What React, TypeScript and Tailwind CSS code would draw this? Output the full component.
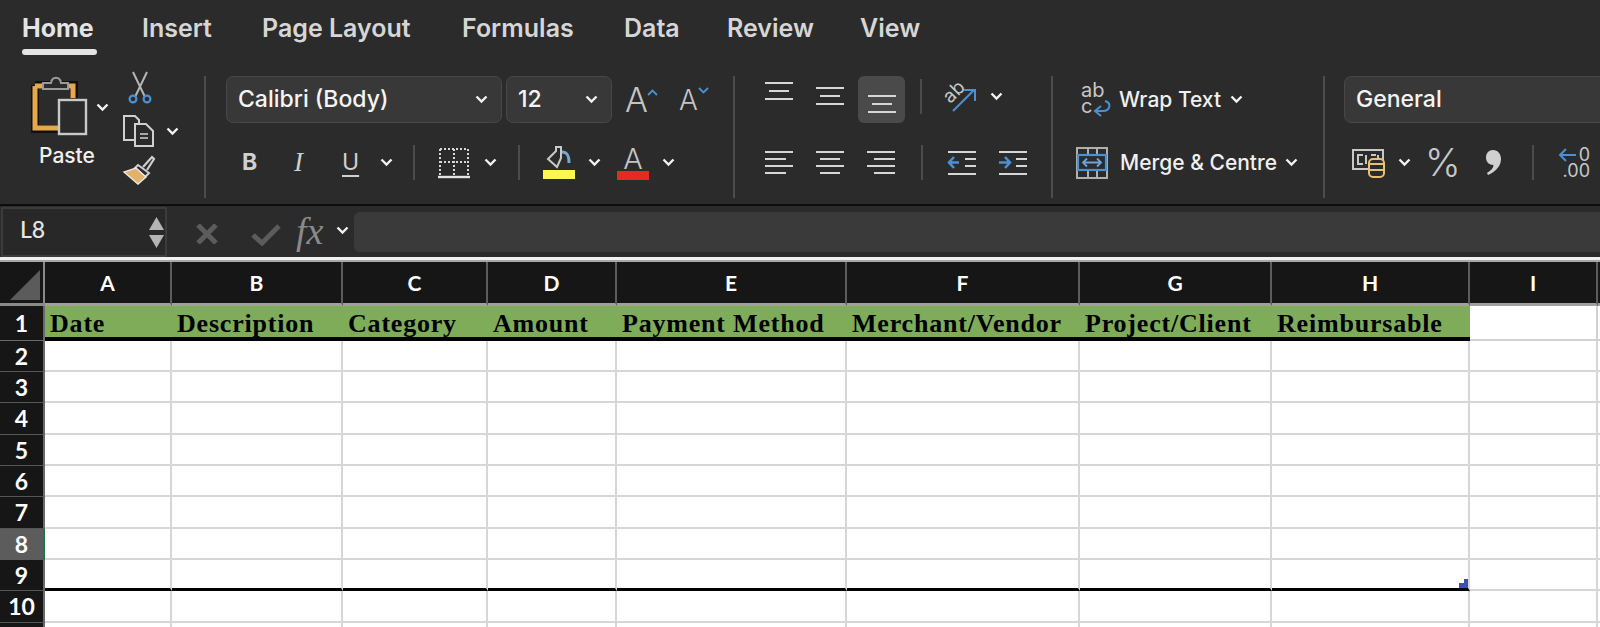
import React from 'react';

const tabs = [
  { label: 'Home', cls: 'ml-[22px] w-[75px] font-bold text-[#e4e4e4]' },
  { label: 'Insert', cls: 'ml-[45px] w-[72px]' },
  { label: 'Page Layout', cls: 'ml-[48px] w-[152px]' },
  { label: 'Formulas', cls: 'ml-[48px] w-[114px]' },
  { label: 'Data', cls: 'ml-[48px] w-[58px]' },
  { label: 'Review', cls: 'ml-[45px] w-[88px]' },
  { label: 'View', cls: 'ml-[45px] w-[60px]' },
];

const Chevron = ({ className = '' }: { className?: string }) => (
  <svg width="13" height="9" viewBox="0 0 13 9" className={`shrink-0 ${className}`}>
    <path d="M1.5 1.5 L6.5 6.5 L11.5 1.5" fill="none" stroke="#f2f2f2" strokeWidth="2.4" />
  </svg>
);

const Sep = ({ className = '' }: { className?: string }) => (
  <div className={`w-[2px] h-[35px] bg-[#4c4c4c] shrink-0 ${className}`} />
);

const Lines = ({ rows }: { rows: [number, number, number][] }) => (
  <svg width="30" height="26" viewBox="0 0 30 26" className="shrink-0">
    {rows.map(([y, x1, x2]) => (
      <line key={y} x1={x1} x2={x2} y1={y} y2={y} stroke="#d6d6d6" strokeWidth="2" />
    ))}
  </svg>
);

const PasteIcon = () => (
  <svg width="60" height="62" viewBox="0 0 60 62" className="shrink-0">
    <path d="M5 11 H44 V24 M5 11 V55 H30" fill="none" stroke="#111" strokeWidth="8" />
    <path d="M5 12 H43 V24 M5 12 V54 H30" fill="none" stroke="#e5a84b" strokeWidth="5" />
    <path d="M13 15 V9 H21 C22 2 30 2 31 9 H38 V15 Z" fill="#2b2b2b" stroke="#9a9a9a" strokeWidth="2" />
    <rect x="29" y="26" width="27" height="34" fill="#2b2b2b" stroke="#c9c9c9" strokeWidth="2.4" />
  </svg>
);

const ScissorsIcon = () => (
  <svg width="24" height="34" viewBox="0 0 24 34">
    <path d="M5 1 L17 26 M19 1 L7 26" fill="none" stroke="#b5b5b5" strokeWidth="2" />
    <circle cx="5" cy="28" r="3.4" fill="none" stroke="#4a90d2" strokeWidth="2.2" />
    <circle cx="19" cy="28" r="3.4" fill="none" stroke="#4a90d2" strokeWidth="2.2" />
  </svg>
);

const CopyIcon = () => (
  <svg width="34" height="34" viewBox="0 0 34 34">
    <path d="M13 26 H2 V2 H13 L17 6 V9" fill="none" stroke="#d0d0d0" strokeWidth="2" />
    <path d="M13 10 H24 L31 17 V32 H13 Z" fill="#2b2b2b" stroke="#d0d0d0" strokeWidth="2" />
    <path d="M18 20 H26 M18 24 H26" stroke="#a8a8a8" strokeWidth="2" />
  </svg>
);

const BrushIcon = () => (
  <svg width="34" height="32" viewBox="0 0 34 32">
    <path d="M21 13 L30 3 L32 5 L25 16" fill="none" stroke="#d0d0d0" strokeWidth="2.2" />
    <path d="M16 11 L27 19 L23 23 L13 14 Z" fill="#2b2b2b" stroke="#d0d0d0" strokeWidth="2" />
    <path d="M14 14 L24 23 L16 30 L2 18 Z" fill="#e3b168" stroke="#e8e8e8" strokeWidth="1.4" />
  </svg>
);

const BordersIcon = () => (
  <svg width="32" height="32" viewBox="0 0 32 32">
    <path d="M2 2 H30 V28 M2 2 V28 M16 2 V28 M2 15 H30" fill="none" stroke="#d8d8d8" strokeWidth="2" strokeDasharray="2 2" />
    <line x1="0" x2="32" y1="30" y2="30" stroke="#e6e6e6" strokeWidth="2.4" />
  </svg>
);

const FillIcon = () => (
  <svg width="34" height="36" viewBox="0 0 34 36">
    <path d="M14 3 H19 V14 L15 23 L6 15 L14 7 Z" fill="none" stroke="#c9c9c9" strokeWidth="2" />
    <path d="M20 8 C25 8 27 11 27 19" fill="none" stroke="#7aa6d2" strokeWidth="3" />
    <rect x="1" y="26" width="32" height="9" fill="#fdf84a" />
  </svg>
);

const OrientIcon = () => (
  <svg width="34" height="32" viewBox="0 0 34 32" className="overflow-visible">
    <text x="11" y="17" textAnchor="middle" transform="rotate(-45 11 11)" fontFamily="Inter" fontSize="19" fill="#c8c8c8">ab</text>
    <path d="M10 30 L31 9 M21 9 H32 V20" fill="none" stroke="#4a90d2" strokeWidth="2" />
  </svg>
);

const OutdentIcon = ({ flip = false }: { flip?: boolean }) => (
  <svg width="30" height="26" viewBox="0 0 30 26" className="shrink-0">
    <path d="M1 2 H29 M1 24 H29 M18 9 H29 M18 16 H29" stroke="#d6d6d6" strokeWidth="2" />
    {flip ? (
      <path d="M1 12.5 H11 M7 7 L12 12.5 L7 18" fill="none" stroke="#4a90d2" strokeWidth="2.6" />
    ) : (
      <path d="M12 12.5 H2 M7 7 L2 12.5 L7 18" fill="none" stroke="#4a90d2" strokeWidth="2.6" />
    )}
  </svg>
);

const MergeIcon = () => (
  <svg width="32" height="32" viewBox="0 0 32 32">
    <path d="M1 1 H31 V31 H1 Z M12 1 V31 M21 1 V31" fill="none" stroke="#b0b0b0" strokeWidth="2" />
    <rect x="2" y="8" width="28" height="15" fill="#2b2b2b" stroke="#4a90d2" strokeWidth="2.2" />
    <path d="M7 15.5 H25 M11 11.5 L7 15.5 L11 19.5 M21 11.5 L25 15.5 L21 19.5" fill="none" stroke="#6ba3da" strokeWidth="1.8" />
  </svg>
);

const MoneyIcon = () => (
  <svg width="34" height="30" viewBox="0 0 34 30">
    <rect x="1" y="2" width="30" height="19" fill="#2b2b2b" stroke="#c8c8c8" strokeWidth="2" />
    <path d="M11 7 H6 V16 H11 M14 7 V16 M19 7 H24 M26 7 V11" fill="none" stroke="#c8c8c8" strokeWidth="2" />
    <rect x="17" y="11" width="15" height="18" rx="4" fill="#2b2b2b" stroke="#e6c26f" strokeWidth="2" />
    <path d="M17 16 H32 M17 22 H32" stroke="#e6c26f" strokeWidth="2" />
  </svg>
);

const CommaIcon = () => (
  <svg width="15" height="25" viewBox="0 0 15 25" className="shrink-0">
    <path d="M7 0 C12 0 15 4 15 9 C15 15 11 21 2 25 L1 23 C5 20.5 7.5 18 7.5 15 C3 15 0 12 0 7.5 C0 3 3 0 7 0 Z" fill="#d0d0d0" />
  </svg>
);

const CornerIcon = () => (
  <svg width="30" height="30" viewBox="0 0 30 30">
    <path d="M0 30 L30 0 V30 Z" fill="#5b5b5b" />
  </svg>
);

const Combo = ({ text, cls, showChevron = true }: { text: string; cls: string; showChevron?: boolean }) => (
  <div className={`h-[47px] rounded-[7px] bg-[#383838] border border-[#474747] flex items-center justify-between shrink-0 text-[#f4f4f4] font-medium ${cls}`}>
    <span>{text}</span>
    {showChevron && <Chevron className="mr-[13px]" />}
  </div>
);

const columns = ['A', 'B', 'C', 'D', 'E', 'F', 'G', 'H', 'I', ''];
const headers = ['Date', 'Description', 'Category', 'Amount', 'Payment Method', 'Merchant/Vendor', 'Project/Client', 'Reimbursable'];
const rows = [2, 3, 4, 5, 6, 7, 8, 9, 10, 11];

const App: React.FC = () => {
  return (
    <div className="w-[1600px] h-[627px] overflow-hidden bg-white font-['Inter',sans-serif]">
      {/* Ribbon */}
      <div className="h-[206px] bg-[#2b2b2b] border-b-2 border-[#0d0d0d]">
        <div className="h-[76px] flex items-start pt-[12px] text-[25px] font-semibold text-[#d6d6d6] leading-[32px]">
          {tabs.map((t) => (
            <div key={t.label} className={`shrink-0 whitespace-nowrap ${t.cls}`}>
              {t.label}
              {t.label === 'Home' && <div className="h-[6px] rounded-full bg-[#e4e4e4] mt-[5px]" />}
            </div>
          ))}
        </div>

        <div className="flex h-[122px]">
          {/* Clipboard */}
          <div className="w-[206px] shrink-0 border-r-2 border-[#4c4c4c] flex pl-[30px]">
            <div className="w-[92px] shrink-0">
              <div className="flex items-center h-[62px] -mt-[2px]">
                <PasteIcon />
                <Chevron className="ml-[6px] mt-[4px]" />
              </div>
              <div className="text-[21px] font-medium text-[#f0f0f0] mt-[6px] pl-[9px] leading-[28px]">Paste</div>
            </div>
            <div className="flex flex-col -mt-[5px]">
              <div className="pl-[6px] h-[41px]"><ScissorsIcon /></div>
              <div className="flex items-center h-[38px]">
                <CopyIcon />
                <Chevron className="ml-[10px]" />
              </div>
              <div className="h-[34px] mt-[4px]"><BrushIcon /></div>
            </div>
          </div>

          {/* Font */}
          <div className="w-[529px] shrink-0 border-r-2 border-[#4c4c4c] pl-[20px]">
            <div className="flex items-center h-[47px]">
              <Combo text="Calibri (Body)" cls="w-[276px] pl-[11px] text-[23px]" />
              <Combo text="12" cls="w-[106px] ml-[4px] pl-[11px] text-[23px]" />
              <div className="ml-[13px] flex items-start w-[32px]">
                <span className="text-[34px] font-light text-[#c4c4c4] leading-[40px]">A</span>
                <svg width="11" height="7" viewBox="0 0 11 7" className="mt-[9px] -ml-[1px] shrink-0"><path d="M1 6 L5.5 1.5 L10 6" fill="none" stroke="#4a90d2" strokeWidth="1.8" /></svg>
              </div>
              <div className="ml-[22px] flex items-start">
                <span className="text-[28px] font-light text-[#c4c4c4] leading-[40px]">A</span>
                <svg width="11" height="7" viewBox="0 0 11 7" className="mt-[7px] shrink-0"><path d="M1 1 L5.5 5.5 L10 1" fill="none" stroke="#4a90d2" strokeWidth="1.8" /></svg>
              </div>
            </div>
            <div className="flex items-center h-[35px] mt-[22px] text-[#d0d0d0]">
              <span className="ml-[16px] w-[20px] font-bold text-[23px]">B</span>
              <span className="ml-[32px] w-[20px] italic font-['Liberation_Serif',serif] text-[27px]">I</span>
              <span className="ml-[28px] w-[20px] underline underline-offset-[5px] text-[23px]">U</span>
              <Chevron className="ml-[18px]" />
              <Sep className="ml-[20px]" />
              <div className="ml-[23px] w-[32px]"><BordersIcon /></div>
              <Chevron className="ml-[14px]" />
              <Sep className="ml-[21px]" />
              <div className="ml-[22px] -mt-[2px]"><FillIcon /></div>
              <Chevron className="ml-[12px]" />
              <div className="ml-[16px] w-[32px] flex flex-col items-center h-[35px]">
                <span className="text-[29px] font-light text-[#c4c4c4] leading-[27px] h-[26px]">A</span>
                <div className="w-[32px] h-[9px] bg-[#e9281f]" />
              </div>
              <Chevron className="ml-[13px]" />
            </div>
          </div>

          {/* Alignment */}
          <div className="w-[318px] shrink-0 border-r-2 border-[#4c4c4c] pl-[29px]">
            <div className="flex items-center h-[47px]">
              <div className="w-[30px] -mt-[12px]"><Lines rows={[[2, 1, 29], [10, 5, 25], [18, 1, 29]]} /></div>
              <div className="ml-[21px] w-[30px] -mt-[12px]"><Lines rows={[[7, 1, 29], [15, 5, 25], [23, 1, 29]]} /></div>
              <div className="ml-[13px] w-[47px] h-[47px] rounded-[6px] bg-[#4a4a4a] flex items-center justify-center pt-[10px]">
                <Lines rows={[[4, 1, 29], [12, 5, 25], [20, 1, 29]]} />
              </div>
              <Sep className="ml-[15px] -mt-[6px]" />
              <div className="ml-[21px] -mt-[6px]"><OrientIcon /></div>
              <Chevron className="ml-[13px] -mt-[6px]" />
            </div>
            <div className="flex items-center h-[35px] mt-[22px]">
              <Lines rows={[[2, 1, 29], [9, 1, 22], [16, 1, 29], [23, 1, 22]]} />
              <div className="ml-[21px]"><Lines rows={[[2, 1, 29], [9, 5, 25], [16, 1, 29], [23, 5, 25]]} /></div>
              <div className="ml-[21px]"><Lines rows={[[2, 1, 29], [9, 8, 29], [16, 1, 29], [23, 8, 29]]} /></div>
              <Sep className="ml-[25px]" />
              <div className="ml-[24px]"><OutdentIcon /></div>
              <div className="ml-[21px]"><OutdentIcon flip /></div>
            </div>
          </div>

          {/* Wrap and merge */}
          <div className="w-[272px] shrink-0 border-r-2 border-[#4c4c4c] pl-[23px] text-[21px] font-medium text-[#f0f0f0]">
            <div className="flex items-center h-[47px]">
              <div className="ml-[5px] w-[29px] h-[36px] text-[#c8c8c8] text-[20px] leading-[16px] font-normal shrink-0 relative">
                <div>ab</div>
                <div>c</div>
                <svg width="20" height="18" viewBox="0 0 20 18" className="absolute left-[11px] top-[18px]"><path d="M13 1 C20 3 18 11 11 11 H4 M9 6 L3 11 L9 16" fill="none" stroke="#4a90d2" strokeWidth="2" /></svg>
              </div>
              <span className="ml-[9px] w-[111px] whitespace-nowrap">Wrap Text</span>
              <Chevron />
            </div>
            <div className="flex items-center h-[35px] mt-[22px]">
              <MergeIcon />
              <span className="ml-[12px] w-[165px] whitespace-nowrap">Merge &amp; Centre</span>
              <Chevron />
            </div>
          </div>

          {/* Number */}
          <div className="flex-1 min-w-0 pl-[19px] overflow-hidden">
            <Combo text="General" cls="w-[300px] pl-[11px] text-[23px]" showChevron={false} />
            <div className="flex items-center h-[35px] mt-[22px] text-[#c8c8c8]">
              <div className="ml-[8px]"><MoneyIcon /></div>
              <Chevron className="ml-[12px]" />
              <span className="ml-[14px] text-[38px] font-light w-[34px] leading-[35px]">%</span>
              <div className="ml-[27px]"><CommaIcon /></div>
              <Sep className="ml-[31px]" />
              <div className="ml-[24px] w-[32px] shrink-0 text-[18px] leading-[16px] text-right">
                <div className="relative">0
                  <svg width="19" height="14" viewBox="0 0 19 14" className="absolute left-0 top-[1px]"><path d="M18 7 H2 M8 1 L2 7 L8 13" fill="none" stroke="#4a90d2" strokeWidth="2" /></svg>
                </div>
                <div>.00</div>
              </div>
            </div>
          </div>
        </div>
      </div>

      {/* Formula bar */}
      <div className="h-[51px] bg-[#2b2b2b] flex">
        <div className="w-[166px] h-[50px] ml-[1px] mt-[1px] shrink-0 border-2 border-[#3c3c3c] bg-[#282828] flex items-center justify-between pl-[17px] pr-[1px]">
          <span className="text-[23px] font-medium text-[#e6e6e6] font-['Lato',sans-serif] -mt-[5px]">L8</span>
          <div className="flex flex-col gap-[5px]">
            <svg width="15" height="13" viewBox="0 0 15 13"><path d="M7.5 0 L15 13 H0 Z" fill="#b4b4b4" /></svg>
            <svg width="15" height="13" viewBox="0 0 15 13"><path d="M0 0 H15 L7.5 13 Z" fill="#b4b4b4" /></svg>
          </div>
        </div>
        <div className="ml-[29px] mt-[18px] shrink-0">
          <svg width="22" height="20" viewBox="0 0 22 20"><path d="M2 1 L20 19 M20 1 L2 19" stroke="#5c5c5c" strokeWidth="5" /></svg>
        </div>
        <div className="ml-[33px] mt-[18px] shrink-0">
          <svg width="30" height="22" viewBox="0 0 30 22"><path d="M2 11 L11 19 L28 2" fill="none" stroke="#5c5c5c" strokeWidth="5" /></svg>
        </div>
        <span className="ml-[15px] w-[34px] mt-[5px] shrink-0 italic font-['Liberation_Serif',serif] text-[38px] leading-[40px] text-[#8a8a8a]">fx</span>
        <Chevron className="ml-[6px] mt-[20px]" />
        <div className="ml-[5px] flex-1 h-[40px] mt-[6px] rounded-l-[6px] bg-[#3a3a3a]" />
      </div>

      {/* Sheet */}
      <div className="border-t-[3px] border-[#f0f0f0]">
        <div className="h-[2px] bg-[#a8a8a8]" />
        <div className="grid grid-cols-[45px_127px_171px_145px_129px_230px_233px_192px_198px_128px_100px] grid-rows-[44px_35px_31px_31px_32px_31px_31px_32px_31px_31px_32px_31px]">
          <div className="bg-[#161616] border-r-2 border-b-[3px] border-[#8a8a8a] flex items-end justify-end pr-[3px] pb-[3px]"><CornerIcon /></div>
          {columns.map((c) => (
            <div key={c} className="bg-[#161616] border-r-2 border-b-[3px] border-r-[#5c5c5c] border-b-[#a0a0a0] flex items-center justify-center text-[21px] font-bold text-white font-['Lato',sans-serif]">{c}</div>
          ))}

          <div className="bg-[#161616] border-r-2 border-b border-[#6a6a6a] flex items-center justify-center text-[23px] font-bold text-white font-['Lato',sans-serif]">1</div>
          {headers.map((h) => (
            <div key={h} className="bg-[#7eac59] border-b-[4px] border-black pl-[5px] pt-[3px] flex items-center whitespace-nowrap text-[26px] font-bold text-black tracking-[0.8px] font-['Liberation_Serif',serif]">{h}</div>
          ))}
          <div className="border-r-2 border-b-2 border-[#d2d2d2]" />
          <div className="border-b-2 border-[#d2d2d2]" />

          {rows.map((r) => (
            <React.Fragment key={r}>
              <div className={`border-r-2 border-b flex items-center justify-center text-[23px] font-bold text-white font-['Lato',sans-serif] ${r === 8 ? 'bg-[#5c5c5c] border-r-[#1f7a3a] border-b-[#5c5c5c]' : 'bg-[#161616] border-r-[#6a6a6a] border-b-[#555555]'}`}>{r < 11 ? r : ''}</div>
              {columns.map((c, i) => (
                <div
                  key={i}
                  className={`relative border-r-2 border-r-[#d6d6d6] ${r === 9 && i < 8 ? 'border-b-[3px] border-b-black' : 'border-b-2 border-b-[#d6d6d6]'}`}
                >
                  {r === 9 && i === 7 && (
                    <svg width="9" height="9" viewBox="0 0 9 9" className="absolute right-0 bottom-0">
                      <path d="M5 0 H9 V9 H0 V4 H5 Z" fill="#3f4fb0" />
                    </svg>
                  )}
                </div>
              ))}
            </React.Fragment>
          ))}
        </div>
      </div>
    </div>
  );
};

export default App;
